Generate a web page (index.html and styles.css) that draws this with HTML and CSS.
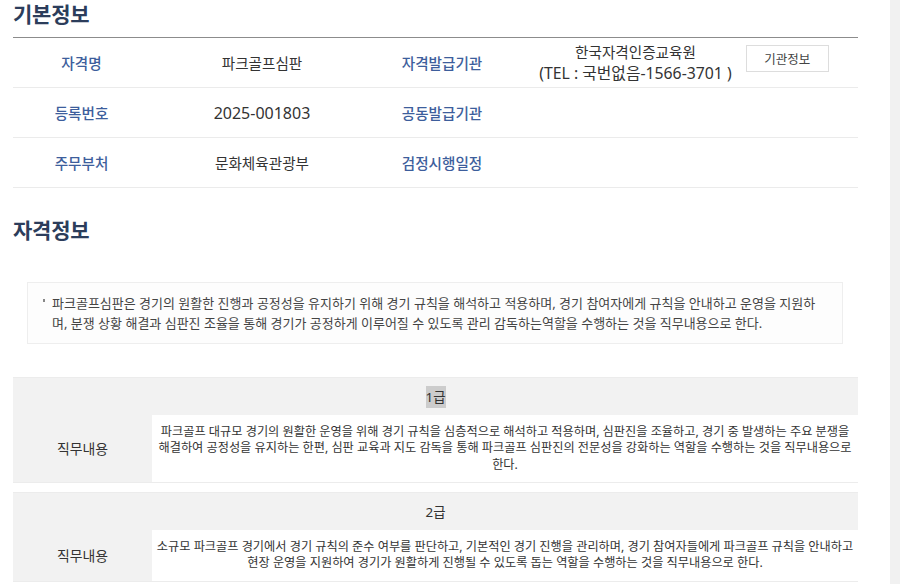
FILE: index.html
```html
<!DOCTYPE html>
<html lang="ko">
<head>
<meta charset="utf-8">
<title>자격정보</title>
<link rel="stylesheet" href="styles.css">
</head>
<body>
<div class="page">
  <main class="content">
    <h2 class="sec-title">기본정보</h2>
    <table class="info">
      <colgroup>
        <col class="c1"><col class="c2"><col class="c3"><col class="c4">
      </colgroup>
      <tr>
        <th>자격명</th>
        <td>파크골프심판</td>
        <th>자격발급기관</th>
        <td>
          <div class="org">
            <div class="org-text">한국자격인증교육원<br><span class="tel">(TEL : 국번없음-1566-3701 )</span></div>
            <button class="org-btn" type="button">기관정보</button>
          </div>
        </td>
      </tr>
      <tr>
        <th>등록번호</th>
        <td class="num">2025-001803</td>
        <th>공동발급기관</th>
        <td></td>
      </tr>
      <tr>
        <th>주무부처</th>
        <td>문화체육관광부</td>
        <th>검정시행일정</th>
        <td></td>
      </tr>
    </table>

    <h2 class="sec-title sec-second">자격정보</h2>
    <div class="desc">
      <p class="desc-text">파크골프심판은 경기의 원활한 진행과 공정성을 유지하기 위해 경기 규칙을 해석하고 적용하며, 경기 참여자에게 규칙을 안내하고 운영을 지원하며, 분쟁 상황 해결과 심판진 조율을 통해 경기가 공정하게 이루어질 수 있도록 관리 감독하는역할을 수행하는 것을 직무내용으로 한다.</p>
    </div>

    <table class="grade">
      <colgroup><col class="g1"><col class="g2"></colgroup>
      <tr><th class="grade-head" colspan="2"><span class="sel">1급</span></th></tr>
      <tr>
        <th class="grade-label">직무내용</th>
        <td class="grade-body">파크골프 대규모 경기의 원활한 운영을 위해 경기 규칙을 심층적으로 해석하고 적용하며, 심판진을 조율하고, 경기 중 발생하는 주요 분쟁을 해결하여 공정성을 유지하는 한편, 심판 교육과 지도 감독을 통해 파크골프 심판진의 전문성을 강화하는 역할을 수행하는 것을 직무내용으로 한다.</td>
      </tr>
    </table>

    <table class="grade">
      <colgroup><col class="g1"><col class="g2"></colgroup>
      <tr><th class="grade-head" colspan="2">2급</th></tr>
      <tr>
        <th class="grade-label">직무내용</th>
        <td class="grade-body">소규모 파크골프 경기에서 경기 규칙의 준수 여부를 판단하고, 기본적인 경기 진행을 관리하며, 경기 참여자들에게 파크골프 규칙을 안내하고 현장 운영을 지원하여 경기가 원활하게 진행될 수 있도록 돕는 역할을 수행하는 것을 직무내용으로 한다.</td>
      </tr>
    </table>
  </main>
  <div class="rail"></div>
</div>
</body>
</html>
```

FILE: styles.css
```css
* { box-sizing: border-box; }

html, body {
  margin: 0;
  padding: 0;
  background: #ffffff;
  font-family: "Noto Sans", "Noto Sans CJK KR", sans-serif;
  color: #333333;
  overflow: hidden;
}

.page {
  display: flex;
  width: 900px;
  height: 584px;
}

.content {
  width: 845px;
  margin-left: 13px;
  flex: none;
}

.rail {
  margin-left: auto;
  width: 10px;
  background: #f1f1f1;
}

.sec-title {
  margin: 0;
  font-size: 21px;
  line-height: 28px;
  height: 37px;
  font-weight: 700;
  letter-spacing: -0.2px;
  color: #2c3d5b;
}

.sec-second {
  margin-top: 28px;
  height: auto;
}

.info {
  width: 845px;
  border-collapse: collapse;
  table-layout: fixed;
  border-top: 1px solid #8c8c8c;
}

.info .c1 { width: 137px; }
.info .c2 { width: 224px; }
.info .c3 { width: 136px; }
.info .c4 { width: 348px; }

.info th,
.info td {
  height: 50px;
  padding: 0;
  text-align: center;
  vertical-align: middle;
  font-size: 14.6px;
  border-bottom: 1px solid #ebebeb;
}

.info th {
  color: #3d5e9c;
  font-weight: 500;
}

.info td {
  color: #333333;
  font-weight: 400;
}

.info td.num {
  font-size: 16px;
}

.org {
  display: flex;
  justify-content: center;
  align-items: flex-start;
  gap: 14px;
}

.org-text {
  line-height: 21px;
  font-size: 14.6px;
}

.tel {
  font-size: 15.8px;
}

.org-btn {
  margin-top: 3px;
  width: 83px;
  height: 27px;
  border: 1px solid #dddddd;
  background: #ffffff;
  font-family: inherit;
  font-size: 12.5px;
  color: #444444;
  padding: 0;
}

.desc {
  margin: 38px 15px 0 14px;
  padding: 10px 14px 10px 24px;
  border: 1px solid #eeeeee;
  background: #fdfdfd;
}

.desc-text {
  margin: 0;
  position: relative;
  font-size: 13px;
  line-height: 20px;
  color: #444444;
}

.desc-text::before {
  content: "";
  position: absolute;
  left: -9px;
  top: 6px;
  width: 2px;
  height: 3px;
  background: #888888;
}

.grade {
  width: 845px;
  border-collapse: collapse;
  table-layout: fixed;
  margin-top: 33px;
  border-top: 1px solid #ececec;
  border-bottom: 1px solid #ececec;
}

.grade + .grade {
  margin-top: 9px;
}

.grade .g1 { width: 139px; }
.grade .g2 { width: 706px; }

.grade-head {
  height: 37px;
  padding: 0;
  background: #f2f2f2;
  text-align: center;
  font-size: 13.4px;
  font-weight: 400;
  color: #333333;
}

.sel {
  background: #cccccc;
  padding: 2px 0;
}

.grade-label {
  background: #f2f2f2;
  text-align: center;
  font-size: 13.9px;
  font-weight: 400;
  color: #333333;
  padding: 0;
}

.grade-body {
  padding: 9px 0;
  text-align: center;
  vertical-align: middle;
  font-size: 12.2px;
  line-height: 16.5px;
  color: #333333;
  word-break: keep-all;
}
```
